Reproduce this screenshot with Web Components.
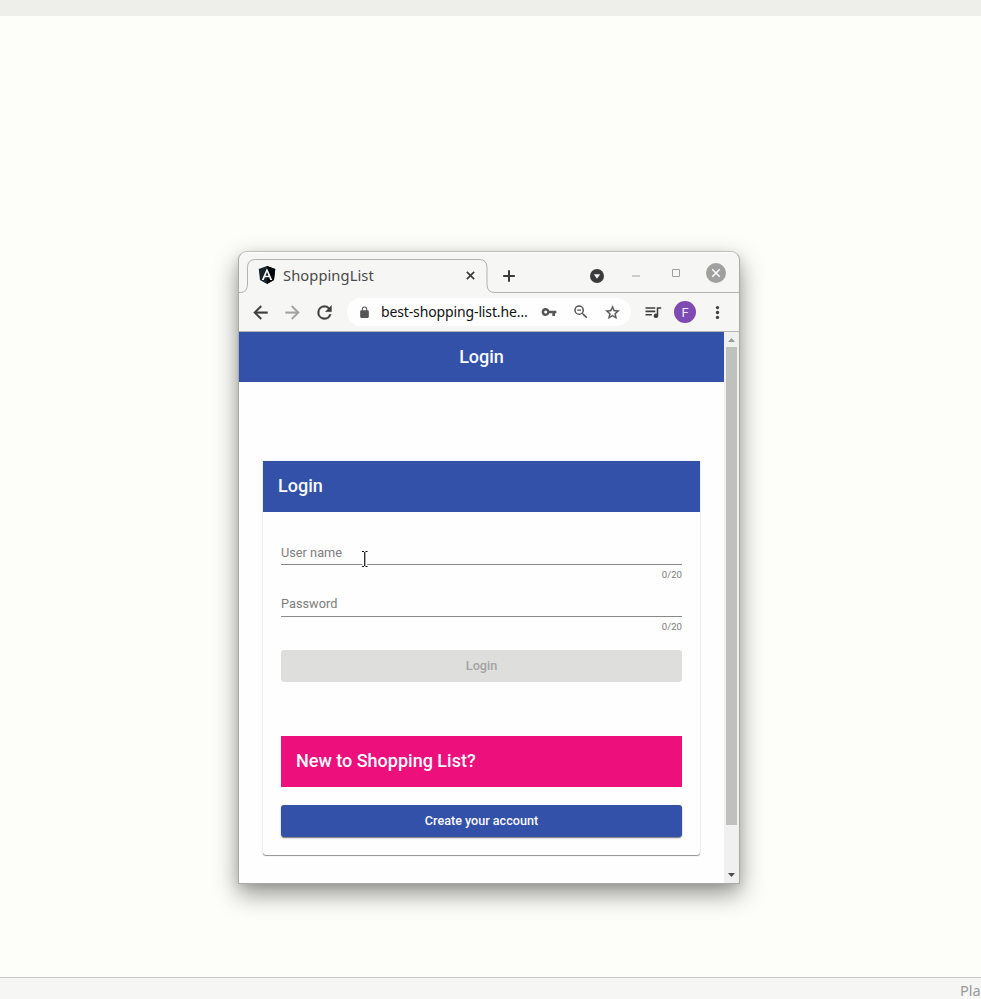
<!DOCTYPE html>
<html lang="en">
<head>
<meta charset="utf-8">
<title>ShoppingList</title>
<style>
html, body { margin: 0; height: 100%; overflow: hidden; background: #fdfef9; }
</style>
</head>
<body>
<desktop-shell></desktop-shell>
<script>
const define = (name, html) => {
  const t = document.createElement('template');
  t.innerHTML = html;
  customElements.define(name, class extends HTMLElement {
    constructor() {
      super();
      this.attachShadow({ mode: 'open' }).append(t.content.cloneNode(true));
    }
  });
};

const ICONS = {
  back: '<path d="M20 11H7.83l5.59-5.59L12 4l-8 8 8 8 1.41-1.41L7.83 13H20z" stroke="currentColor" stroke-width=".4"/>',
  forward: '<path d="M12 4l-1.41 1.41L16.17 11H4v2h12.17l-5.58 5.59L12 20l8-8z" stroke="currentColor" stroke-width=".4"/>',
  reload: '<path d="M17.65 6.35A7.96 7.96 0 0 0 12 4a8 8 0 1 0 7.73 10h-2.08A6 6 0 1 1 12 6c1.66 0 3.14.69 4.22 1.78L13 11h7V4z" stroke="currentColor" stroke-width=".4"/>',
  lock: '<path d="M18 8h-1V6A5 5 0 0 0 7 6v2H6a2 2 0 0 0-2 2v10c0 1.100.9 2 2 2h12a2 2 0 0 0 2-2V10a2 2 0 0 0-2-2zM8.900 8V6a3.100 3.100 0 0 1 6.200 0v2z"/>',
  key: '<path fill-rule="evenodd" d="M12.650 10A6 6 0 0 0 1 12a6 6 0 0 0 11.650 2H17v4h4v-4h2v-4zM7 14.300a2.300 2.300 0 1 1 0-4.600 2.300 2.300 0 0 1 0 4.600z"/>',
  zoomout: '<path d="M15.5 14h-.79l-.28-.27A6.470 6.470 0 0 0 16 9.500 6.500 6.500 0 1 0 9.500 16c1.610 0 3.090-.59 4.230-1.570l.27.28v.79l5 4.990L20.490 19zm-6 0a4.500 4.500 0 1 1 0-9 4.500 4.500 0 0 1 0 9zM7 8.700h5v1.500H7z"/>',
  star: '<path d="M22 9.240l-7.190-.62L12 2 9.190 8.630 2 9.240l5.460 4.730L5.820 21 12 17.270 18.180 21l-1.630-7.030zM12 15.400l-3.760 2.270 1-4.280-3.320-2.880 4.380-.38L12 6.100l1.710 4.040 4.380.38-3.320 2.880 1 4.280z" stroke="currentColor" stroke-width=".4"/>',
  queue: '<path d="M15 5.500H2v2.200h13zM15 10H2v2.200h13zM2 16.700h8.500v-2.200H2zM17 5.500v8.680A3 3 0 1 0 19 17V7.700h4V5.500z"/>',
  menu: '<circle cx="12" cy="5" r="2.300"/><circle cx="12" cy="12" r="2.300"/><circle cx="12" cy="19" r="2.300"/>',
  close: '<path d="M4 4L20 20M20 4L4 20" fill="none" stroke="currentColor" stroke-width="3.600"/>',
  plus: '<path d="M12 2V22M2 12H22" fill="none" stroke="currentColor" stroke-width="3.400"/>',
  search: '<circle cx="12" cy="12" r="12"/><path d="M6.500 9h11L12 16.500z" fill="#f6f6f5"/>',
  minimise: '<path d="M0 12H24" stroke="currentColor" stroke-width="3"/>',
  maximise: '<path d="M1.500 1.500H22.500V22.500H1.500z" fill="none" stroke="currentColor" stroke-width="3"/>',
  windowclose: '<circle cx="12" cy="12" r="12"/><path d="M7.500 7.500L16.500 16.500M16.500 7.500L7.500 16.500" stroke="#fff" stroke-width="1.700"/>',
  angular: '<path d="M12 0L23 4 21.300 18.500 12 24 2.700 18.500 1 4z" fill="#17242b"/><path d="M12 0L23 4 21.300 18.500 12 24z" fill="#05090c"/><path fill-rule="evenodd" fill="#fff" d="M12 3L5 18.500h2.700l1.400-3.500h5.800l1.400 3.500H19zM12 8l2 4.900h-4z"/>',
};
customElements.define('ui-icon', class extends HTMLElement {
  connectedCallback() {
    const s = this.getAttribute('size') || 18;
    this.attachShadow({ mode: 'open' }).innerHTML =
      `<style>:host{display:inline-flex;flex:none;align-items:center;justify-content:center}svg{display:block;fill:currentColor}</style>
       <svg width="${s}" height="${s}" viewBox="0 0 24 24">${ICONS[this.getAttribute('name')]}</svg>`;
  }
});

define('tab-strip', `<style>
  :host { display: flex; position: relative; height: 41px; color: #3b3b3b; font: 15px "Noto Sans", sans-serif; }
  .outline { position: absolute; left: 0; top: 0; }
  .tab { display: flex; align-items: center; box-sizing: border-box; width: 240px; margin: 7px 0 0 8px; padding: 0 8px 2px 11px; z-index: 1; }
  .title { flex: 1; margin-left: 7px; font-size: 14.7px; line-height: 20px; letter-spacing: .08px; color: #4a4a4a; white-space: nowrap; }
  .close { width: 17px; }
  .plus { width: 44px; padding-top: 7px; }
  .fill { flex: 1; }
  .find { width: 38px; padding-top: 7px; }
  .ctl { width: 40px; color: #a0a0a0; padding-top: 1px; }
  .min { padding-top: 6px; box-sizing: border-box; }
  .end { width: 3px; }
</style>
<svg class="outline" width="500" height="41" viewBox="0 0 500 41"><path d="M0 40.500H1Q8.500 40.500 8.500 32V15.500Q8.500 7.500 16.500 7.500H240Q248 7.500 248 15.500V32.500Q248 40.500 256 40.500H500" fill="none" stroke="#b1b1af"/></svg>
<div class="tab"><ui-icon name="angular" size="18"></ui-icon><span class="title"><slot></slot></span><ui-icon class="close" name="close" size="11"></ui-icon></div>
<ui-icon class="plus" name="plus" size="14"></ui-icon>
<span class="fill"></span>
<ui-icon class="find" name="search" size="14"></ui-icon>
<ui-icon class="ctl min" name="minimise" size="8"></ui-icon>
<ui-icon class="ctl" name="maximise" size="8"></ui-icon>
<ui-icon class="ctl" name="windowclose" size="20"></ui-icon>
<span class="end"></span>`);

define('nav-bar', `<style>
  :host { display: flex; align-items: center; box-sizing: border-box; height: 39px; padding: 0 6px; border-bottom: 1px solid #b5b5b2; color: #3f3f3f; }
  .slot { width: 32px; }
  .nudge { box-sizing: border-box; padding-right: 1px; }
  .dim { color: #a3a3a3; }
  .box { display: flex; align-items: center; box-sizing: border-box; flex: 1; height: 28px; margin: 0 6px; padding: 0 2px; border-radius: 14px; background: #fefefe; color: #555; }
  .url { flex: 1; color: #111; font: 14px/20px "Noto Sans", sans-serif; letter-spacing: -.13px; white-space: nowrap; }
  .avatar { display: flex; align-items: center; justify-content: center; width: 22px; height: 22px; margin: 0 5px; border-radius: 50%; background: #7d4bb2; color: #f1e9f8; font: 13px Roboto, sans-serif; }
</style>
<ui-icon class="slot nudge" name="back" size="21"></ui-icon><ui-icon class="slot nudge dim" name="forward" size="21"></ui-icon><ui-icon class="slot nudge" name="reload" size="21"></ui-icon>
<div class="box"><ui-icon class="slot nudge" name="lock" size="13"></ui-icon><div class="url"><slot></slot></div>
<ui-icon class="slot" name="key" size="16"></ui-icon><ui-icon class="slot" name="zoomout" size="18"></ui-icon><ui-icon class="slot nudge" name="star" size="17"></ui-icon></div>
<ui-icon class="slot" name="queue" size="18"></ui-icon><div class="avatar">F</div><ui-icon class="slot" name="menu" size="17"></ui-icon>`);

define('scroll-bar', `<style>
  :host { display: flex; flex-direction: column; align-items: center; width: 15px; background: #f0f0f0; }
  .arrow { display: flex; align-items: center; justify-content: center; height: 15px; }
  .down { height: 17px; }
  .thumb { width: 11px; height: 478px; background: #c0c0bf; }
  .rest { flex: 1; }
</style>
<div class="arrow"><svg width="7" height="4"><path d="M0 4H7L3.500 0z" fill="#9a9a9a"/></svg></div>
<div class="thumb"></div><div class="rest"></div>
<div class="arrow down"><svg width="7" height="4"><path d="M0 0H7L3.500 4z" fill="#4c4c4c"/></svg></div>`);

define('title-bar', `<style>
  :host { display: flex; align-items: center; box-sizing: border-box; height: 51px; padding: 0 15px 2px; background: #3351a9; color: #fafaff; font: 500 18px/24px Roboto, sans-serif; }
  :host([center]) { justify-content: center; height: 50px; padding: 0 0 1px; }
  :host([accent]) { background: #ec0f7c; }
</style><slot></slot>`);

define('text-field', `<style>
  :host { display: flex; flex-direction: column; color: #7d7d7d; font: 12.75px/21px Roboto, sans-serif; }
  .label { height: 22px; border-bottom: 1px solid #8a8a88; }
  :host([tight]) .label { line-height: 19px; }
  .count { height: 20px; text-align: right; font-size: 9.6px; line-height: 20px; }
</style><div class="label"><slot></slot></div><div class="count">0/20</div>`);

define('action-button', `<style>
  :host { display: flex; align-items: center; justify-content: center; box-sizing: border-box; height: 32px; border-radius: 3px; background: #3351a9; color: #fafaff; font: 500 12.6px/20px Roboto, sans-serif; box-shadow: 0 2px 1px -1px rgba(0,0,0,.3), 0 1px 2px rgba(0,0,0,.35); }
  :host([disabled]) { background: #dededd; color: #a3a3a2; box-shadow: none; }
</style><slot></slot>`);

define('login-page', `<style>
  :host { display: flex; flex-direction: column; flex: 1; background: #fefefe; }
  .card { margin: 79px 24px 0; border-radius: 0 0 3px 3px; background: #fefefe; box-shadow: 0 1px 1px rgba(0,0,0,.42), 0 0 1px rgba(0,0,0,.25); }
  .body { display: flex; flex-direction: column; padding: 30px 18px 18px; }
  .fields { display: flex; flex-direction: column; gap: 9px; margin-bottom: 13px; }
  .new { margin: 54px 0 18px; }
</style>
<title-bar center>Login</title-bar>
<section class="card"><title-bar>Login</title-bar>
<div class="body"><div class="fields"><text-field>User name</text-field><text-field tight>Password</text-field></div>
<action-button disabled>Login</action-button>
<title-bar accent class="new">New to Shopping List?</title-bar>
<action-button>Create your account</action-button></div></section>`);

define('browser-window', `<style>
  :host { display: flex; flex-direction: column; box-sizing: border-box; width: 502px; height: 633px; border: 1px solid #a9a9a7; border-top-color: #bdbdbb; border-radius: 9px 9px 0 0; background: #f6f6f5; box-shadow: inset 0 1px #fff, 0 10px 24px rgba(0,0,0,.42), 0 3px 8px rgba(0,0,0,.08); }
  .view { display: flex; flex: 1; }
</style>
<tab-strip>ShoppingList</tab-strip><nav-bar>best-shopping-list.he…</nav-bar>
<div class="view"><login-page></login-page><scroll-bar></scroll-bar></div>`);

define('desktop-shell', `<style>
  :host { display: flex; flex-direction: column; position: relative; width: 981px; height: 999px; overflow: hidden; background: #fdfef9; }
  .top { height: 16px; background: #eeeeea; }
  .space { flex: 1; }
  .status { display: flex; box-sizing: border-box; height: 22px; padding-left: 960px; border-top: 1px solid #c9c9c7; background: #f6f6f5; color: #999; font: 14.5px/24px "Noto Sans", sans-serif; white-space: nowrap; }
  browser-window { position: absolute; left: 238px; top: 251px; }
  .pointer { position: absolute; left: 359px; top: 549px; }
</style>
<div class="top"></div><div class="space"></div><div class="status">Pla</div>
<browser-window></browser-window>
<svg class="pointer" width="12" height="20" viewBox="0 0 12 20" fill="none"><path d="M3 2.500H8.500M5.750 3V17M3 17.500H8.500" stroke="#fff" stroke-width="4"/><path d="M3 2.500H5M6.500 2.500H8.500M5.750 3V17M3 17.500H5M6.500 17.500H8.500" stroke="#111" stroke-width="1.200"/></svg>`);
</script>
</body>
</html>
